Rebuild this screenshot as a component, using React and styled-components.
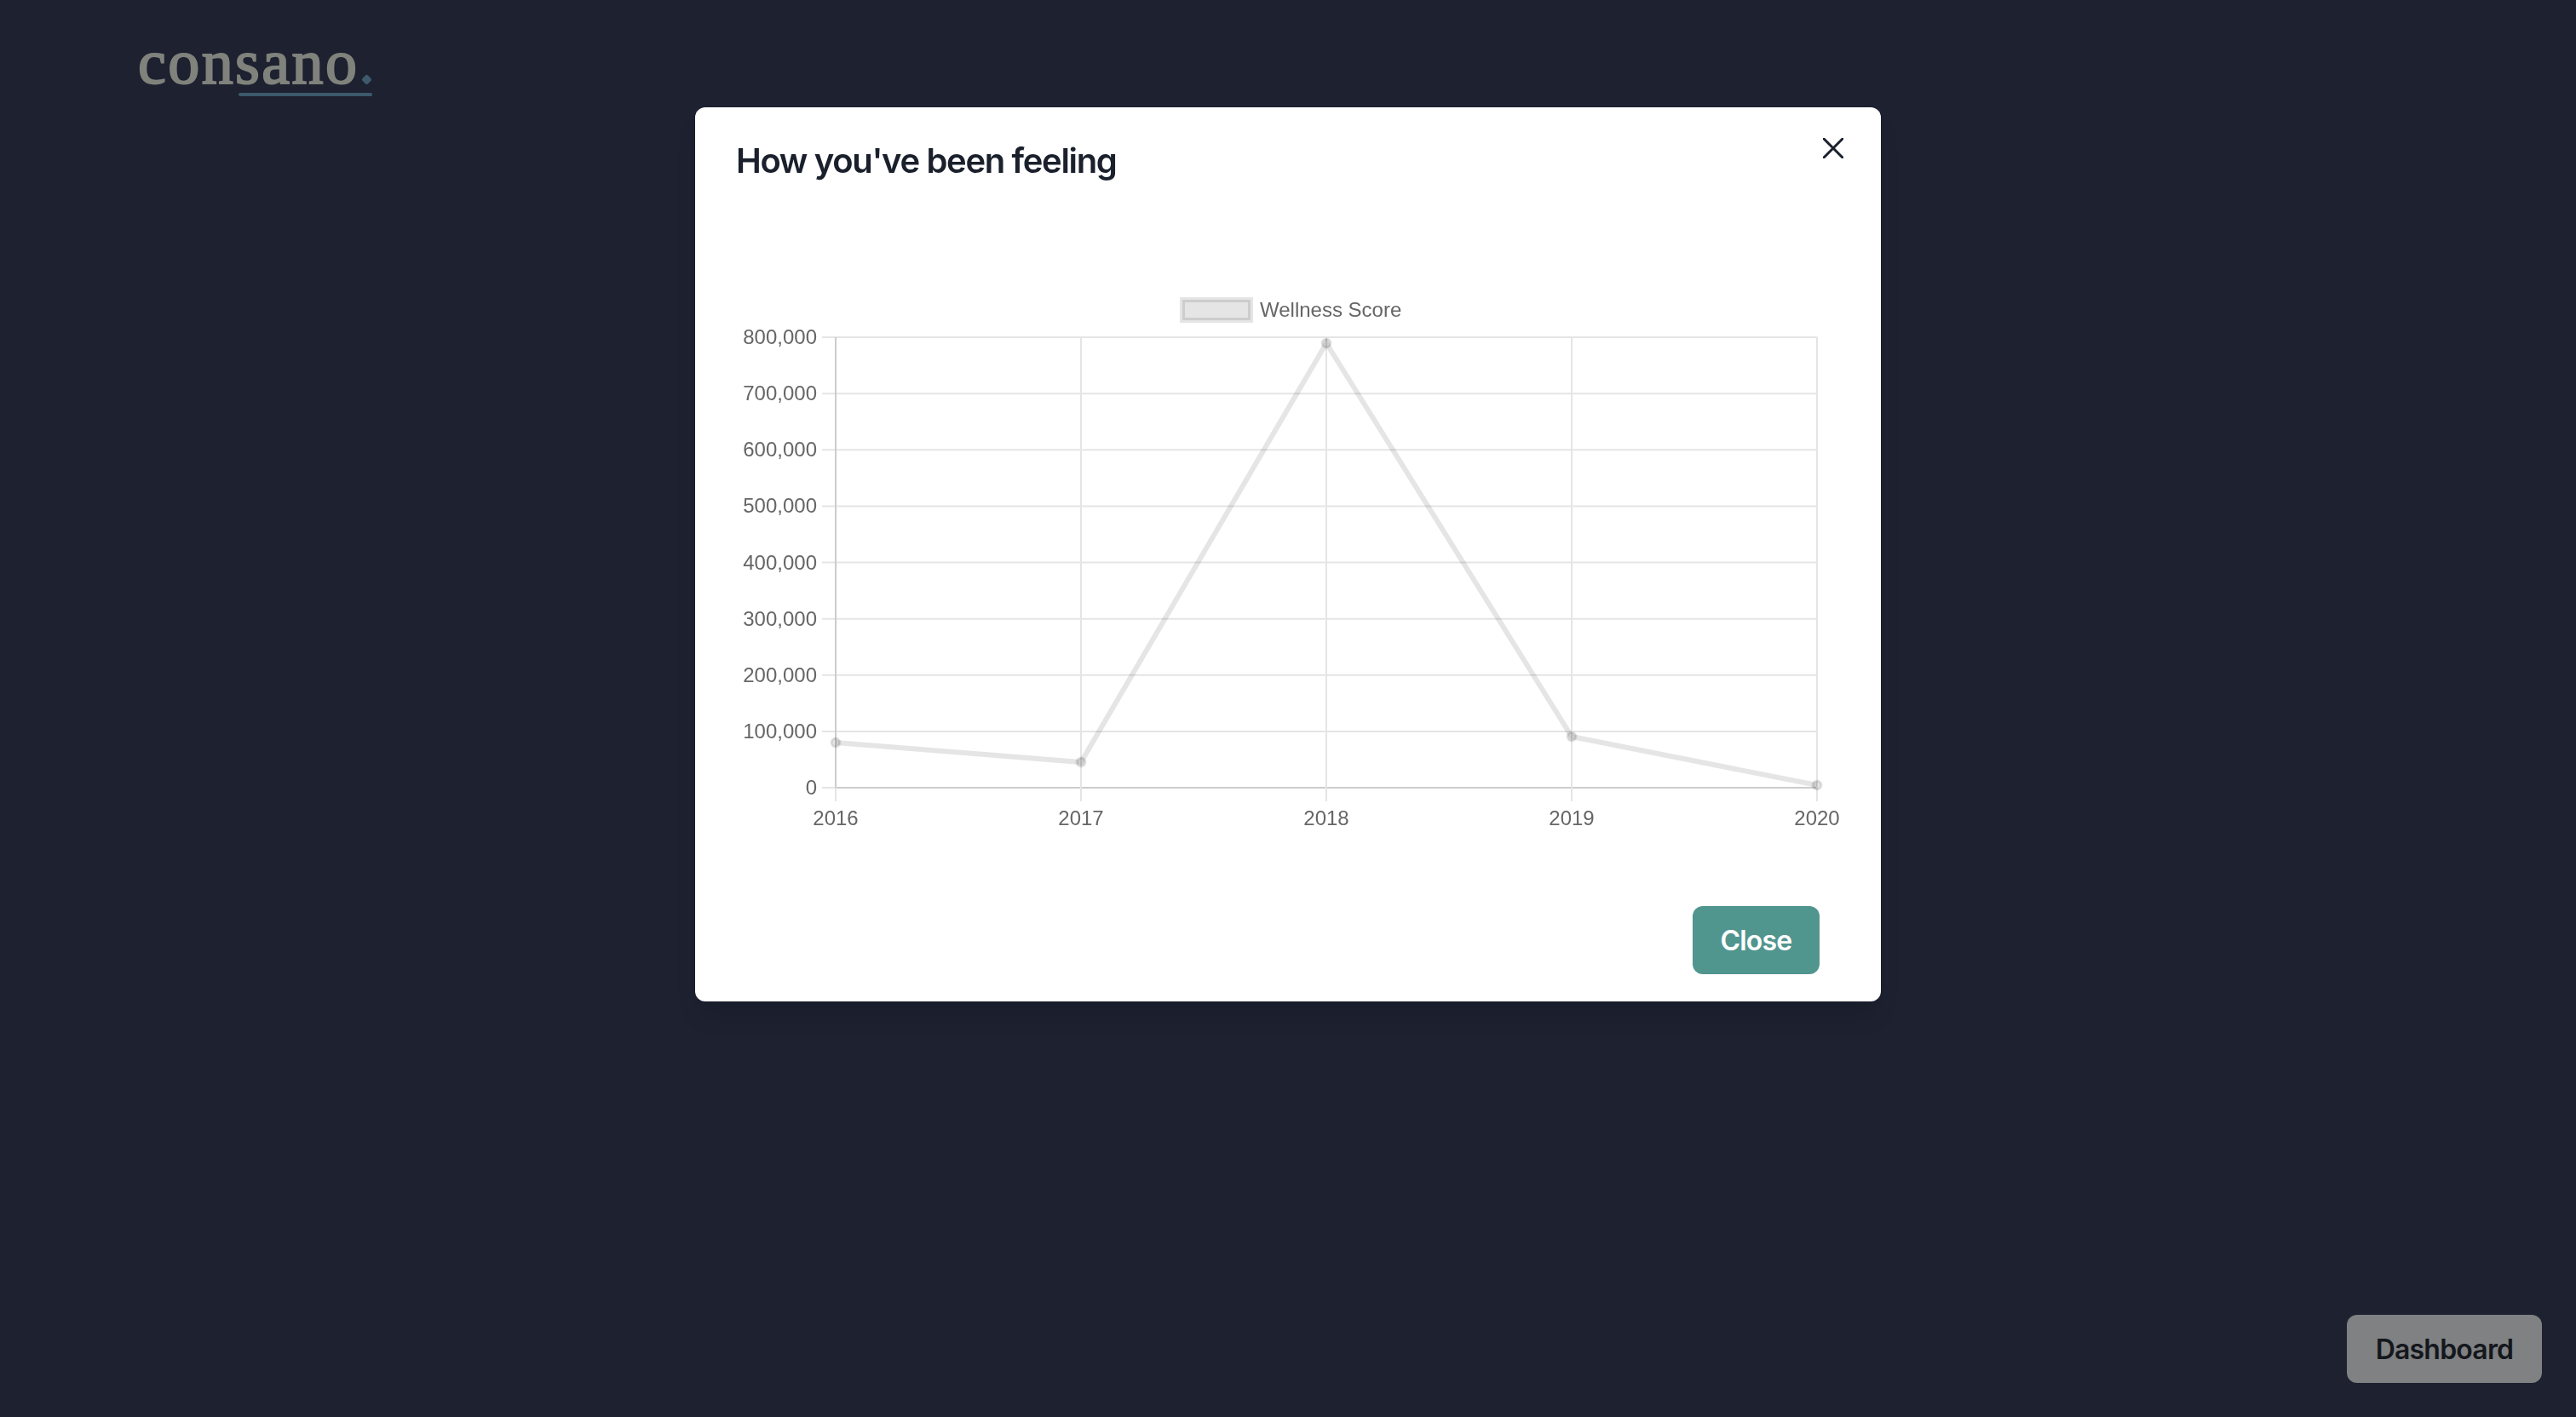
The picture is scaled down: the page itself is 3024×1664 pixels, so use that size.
import React from 'react'
import styled, { createGlobalStyle } from 'styled-components'

const GlobalStyle = createGlobalStyle`
  * { box-sizing: border-box; }
  html, body { margin: 0; padding: 0; }
  body {
    background: #1d2130;
    font-family: Inter, "Liberation Sans", sans-serif;
  }
`

const Page = styled.div`
  width: 3024px;
  height: 1664px;
  display: flex;
  flex-direction: column;
  justify-content: space-between;
  background: #1d2130;
  overflow: hidden;
`

const Header = styled.header`
  padding: 28px 162px 0;
`

const Logo = styled.div`
  position: relative;
  display: inline-flex;
  align-items: baseline;
  height: 90px;
  font-family: "Liberation Serif", serif;
  font-weight: 400;
  font-size: 74px;
  line-height: 90px;
  letter-spacing: 2.4px;
  color: #80827c;
  -webkit-text-stroke: 2px #80827c;
`

const LogoDot = styled.span`
  display: inline-block;
  width: 9px;
  height: 9px;
  margin-left: 5px;
  border-radius: 2px;
  background: #3c5a6b;
  transform: rotate(45deg);
`

const LogoLine = styled.span`
  position: absolute;
  left: 118px;
  top: 81px;
  width: 157px;
  height: 4px;
  border-radius: 2px;
  background: #3c5a6b;
`

const Footer = styled.footer`
  display: flex;
  justify-content: flex-end;
  padding: 0 40px 40px;
`

const Button = styled.button`
  width: ${p => p.$width}px;
  height: 80px;
  padding: 0;
  border: 0;
  border-radius: 12px;
  background: ${p => p.$bg};
  color: ${p => p.$color};
  font-family: Inter, sans-serif;
  font-weight: 600;
  font-size: 32px;
  letter-spacing: -0.8px;
`

const Overlay = styled.div`
  position: fixed;
  inset: 0;
  display: flex;
  justify-content: center;
  align-items: flex-start;
  padding-top: 126px;
`

const Modal = styled.section`
  position: relative;
  width: 1392px;
  height: 1050px;
  display: flex;
  flex-direction: column;
  border-radius: 12px;
  background: #fff;
  box-shadow: 0 20px 30px -6px rgba(0, 0, 0, 0.1), 0 8px 12px -4px rgba(0, 0, 0, 0.05);
`

const ModalHeader = styled.h2`
  margin: 0;
  height: 124px;
  padding: 32px 48px;
  font-weight: 600;
  font-size: 40px;
  line-height: 62px;
  letter-spacing: -1.35px;
  color: #1a202c;
`

const CloseIcon = styled.button`
  position: absolute;
  top: 16px;
  right: 24px;
  width: 64px;
  height: 64px;
  display: flex;
  align-items: center;
  justify-content: center;
  padding: 0;
  border: 0;
  background: none;
  color: #1a202c;
`

const ChartBox = styled.div`
  padding: 0 48px;
  height: 782px;
`

const Chart = styled.svg`
  display: block;
`

const ModalFooter = styled.div`
  display: flex;
  justify-content: flex-end;
  padding: 32px 72px;
`

const TickLabel = styled.text`
  font-family: "Liberation Sans", Arial, sans-serif;
  font-size: 24px;
  fill: #666;
`

const years = ['2016', '2017', '2018', '2019', '2020']
const ticks = ['800,000', '700,000', '600,000', '500,000', '400,000', '300,000', '200,000', '100,000', '0']

const left = 117
const right = 1269
const top = 146
const bottom = 675
const stepX = (right - left) / 4
const stepY = (bottom - top) / 8
const grid = '#e5e5e5'
const axis = '#cccccc'

const points = [622, 645, 153, 615, 672].map((y, i) => [left + stepX * i, y])

const WellnessChart = () => (
  <Chart width="1296" height="782" viewBox="0 0 1296 782">
    <rect x="524" y="102" width="80" height="24" fill="rgba(0,0,0,0.1)" stroke="rgba(0,0,0,0.1)" strokeWidth="6" />
    <TickLabel x="615" y="122">Wellness Score</TickLabel>

    {ticks.map((t, i) => {
      const y = top + stepY * i
      const zero = i === ticks.length - 1
      return (
        <g key={t}>
          <line x1={left - 16} x2={right} y1={y} y2={y} stroke={grid} strokeWidth="2" />
          {zero && <line x1={left} x2={right} y1={y} y2={y} stroke={axis} strokeWidth="2" />}
          <TickLabel x={left - 22} y={y + 8} textAnchor="end">{t}</TickLabel>
        </g>
      )
    })}

    {years.map((t, i) => {
      const x = left + stepX * i
      return (
        <g key={t}>
          <line x1={x} x2={x} y1={top} y2={bottom + 16} stroke={grid} strokeWidth="2" />
          {i === 0 && <line x1={x} x2={x} y1={top} y2={bottom} stroke={axis} strokeWidth="2" />}
          <TickLabel x={x} y={719} textAnchor="middle">{t}</TickLabel>
        </g>
      )
    })}

    <polyline
      points={points.map(p => p.join(',')).join(' ')}
      fill="none"
      stroke="rgba(0,0,0,0.1)"
      strokeWidth="6"
    />
    {points.map(([x, y]) => (
      <circle key={x} cx={x} cy={y} r="5" fill="rgba(0,0,0,0.1)" stroke="rgba(0,0,0,0.1)" strokeWidth="3" />
    ))}
  </Chart>
)

const App = () => (
  <>
    <GlobalStyle />
    <Page>
      <Header>
        <Logo>
          consano
          <LogoDot />
          <LogoLine />
        </Logo>
      </Header>
      <Footer>
        <Button $width={229} $bg="#7f8183" $color="#14171c">Dashboard</Button>
      </Footer>
    </Page>
    <Overlay>
      <Modal>
        <ModalHeader>How you've been feeling</ModalHeader>
        <CloseIcon aria-label="Close">
          <svg width="24" height="24" viewBox="0 0 24 24">
            <path d="M1 1 L23 23 M23 1 L1 23" stroke="currentColor" strokeWidth="3" strokeLinecap="round" fill="none" />
          </svg>
        </CloseIcon>
        <ChartBox>
          <WellnessChart />
        </ChartBox>
        <ModalFooter>
          <Button $width={149} $bg="#51958f" $color="#fff">Close</Button>
        </ModalFooter>
      </Modal>
    </Overlay>
  </>
)

export default App
